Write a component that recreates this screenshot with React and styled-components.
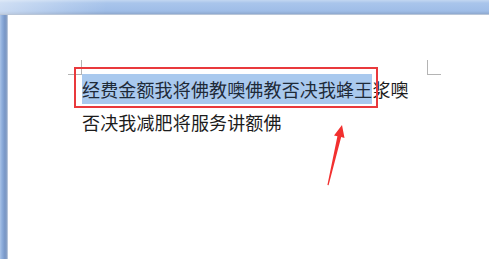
import styled, { createGlobalStyle } from "styled-components";

const GlobalStyle = createGlobalStyle`
  html, body {
    margin: 0;
    padding: 0;
    background: #fff;
  }
  #root {
    width: 489px;
    height: 259px;
    overflow: hidden;
  }
`;

const Window = styled.div`
  display: flex;
  flex-direction: column;
  width: 489px;
  height: 259px;
  overflow: hidden;
`;

const TopBar = styled.div`
  height: 15px;
  flex: none;
  background:
    linear-gradient(100deg, rgba(255, 255, 255, 0.45) 0, rgba(255, 255, 255, 0.15) 14%, rgba(255, 255, 255, 0) 22%),
    linear-gradient(#c3d7f1 0, #a9c5eb 3px, #9fbde7 11px, #8ea9cf 14px);
  border-bottom: 1px solid #b9c6d8;
  box-sizing: border-box;
`;

const Body = styled.div`
  flex: 1;
  display: flex;
`;

const LeftEdge = styled.div`
  width: 8px;
  flex: none;
  background: linear-gradient(90deg, #a9c2e6 0, #8eaedc 2px, #7896c6 5px, #8ea4c6 7px, #dde4ee 8px);
`;

const Page = styled.div`
  position: relative;
  flex: 1;
  background: #fff;
  padding: 59px 0 0 74px;
  font-family: "Microsoft YaHei", "Noto Sans CJK SC", "Noto Sans", sans-serif;
  font-size: 18px;
  letter-spacing: 0.15px;
  color: #1c1c1c;
`;

const Line = styled.div`
  height: 33px;
  line-height: 31px;
  white-space: nowrap;
`;

const Highlight = styled.span`
  display: inline-block;
  height: 30px;
  line-height: 31px;
  background: #a9c9ee;
  color: #1e2a38;
`;

const CropMark = styled.div`
  position: absolute;
  top: ${(p) => p.$top}px;
  left: ${(p) => p.$left}px;
  width: 14px;
  height: 15px;
  box-sizing: border-box;
  border-bottom: 1px solid #b4b4b4;
  ${(p) => (p.$side === "left" ? "border-right: 1px solid #b4b4b4;" : "border-left: 1px solid #b4b4b4;")}
`;

const RedFrame = styled.div`
  position: absolute;
  left: 66px;
  top: 52px;
  width: 304px;
  height: 41px;
  box-sizing: border-box;
  border: 2px solid #e9393c;
`;

const ArrowLayer = styled.svg`
  position: absolute;
  left: 0;
  top: 0;
  width: 481px;
  height: 244px;
  pointer-events: none;
`;

export default function App() {
  return (
    <>
      <GlobalStyle />
      <Window>
        <TopBar />
        <Body>
          <LeftEdge />
          <Page>
            <CropMark $side="left" $left={60} $top={45} />
            <CropMark $side="right" $left={419} $top={45} />
            <Line>
              <Highlight>经费金额我将佛教噢佛教否决我蜂王</Highlight>浆噢
            </Line>
            <Line>否决我减肥将服务讲额佛</Line>
            <RedFrame />
            <ArrowLayer viewBox="0 0 481 244">
              <polygon
                points="334,110 336.5,123 333.2,122 320.6,170.2 319.4,170 329.4,121.3 326,120.6"
                fill="#f2302f"
              />
            </ArrowLayer>
          </Page>
        </Body>
      </Window>
    </>
  );
}
